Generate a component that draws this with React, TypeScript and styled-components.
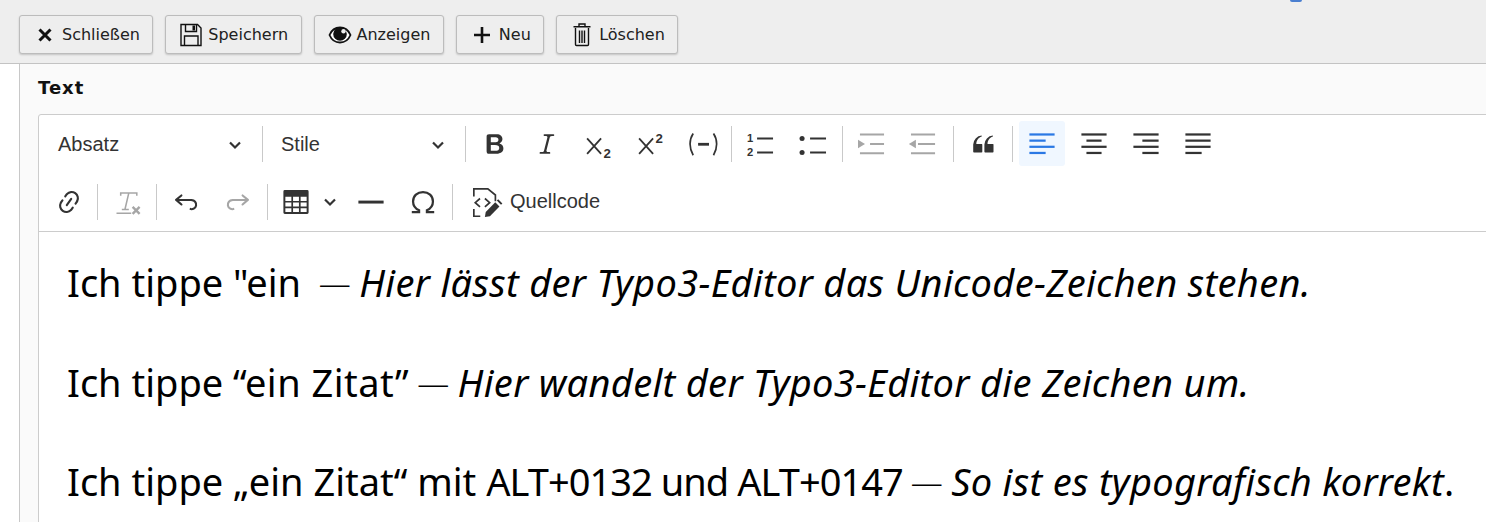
import * as React from 'react';
import styled, {createGlobalStyle} from 'styled-components';

//region [[ Styles ]]

const GlobalStyle = createGlobalStyle`
  html, body {
    margin: 0;
    padding: 0;
    height: 100%;
    background: #fff;
    overflow: hidden;
  }
`;

const Page = styled.div`
  display: flex;
  flex-direction: column;
  width: 1486px;
  height: 522px;
  overflow: hidden;
`;

const DocBar = styled.div`
  position: relative;
  display: flex;
  flex-shrink: 0;
  gap: 12px;
  align-items: flex-start;
  box-sizing: border-box;
  height: 64px;
  padding: 15px 0 0 19px;
  background: #eeeeee;
  border-bottom: 1px solid #c3c3c3;
`;

const Blip = styled.div`
  position: absolute;
  top: 0;
  left: 1290px;
  width: 12px;
  height: 2px;
  border-radius: 0 0 6px 6px;
  background: #4a7fd0;
`;

const DocButton = styled.button`
  display: flex;
  align-items: center;
  gap: 5px;
  box-sizing: border-box;
  height: 39px;
  padding: 0 12.4px 0 13px;
  background: #eeeeee;
  border: 1px solid #bcbcbc;
  border-radius: 3px;
  box-shadow: 0 1px 2px rgba(0, 0, 0, 0.18);
  color: #212121;
  font-family: "DejaVu Sans", Verdana, sans-serif;
  font-size: 16px;
`;

const DocIcon = styled.svg`
  flex-shrink: 0;
  width: 24px;
  height: 24px;
  overflow: visible;
`;

const Body = styled.div`
  flex: 1;
  min-height: 0;
  padding-left: 19px;
`;

const Panel = styled.div`
  box-sizing: border-box;
  width: 1600px;
  height: 100%;
  padding-left: 18px;
  background: #fafafa;
  border-left: 1px solid #c8c8c8;
`;

const FieldLabel = styled.div`
  height: 50px;
  color: #111;
  font-family: "DejaVu Sans", Verdana, sans-serif;
  font-size: 18px;
  font-weight: bold;
  letter-spacing: 1px;
  line-height: 47px;
`;

const Editor = styled.div`
  background: #fff;
  border: 1px solid #cccccc;
  border-radius: 3px 0 0 0;
`;

const Toolbar = styled.div`
  display: flex;
  flex-direction: column;
  gap: 13px;
  box-sizing: border-box;
  height: 117px;
  padding: 6px 0 0 7px;
  border-bottom: 1px solid #cccccc;
`;

const ToolRow = styled.div`
  display: flex;
  align-items: center;
  gap: 6px;
  height: 45px;
`;

const Separator = styled.span<{ $tight?: boolean }>`
  flex-shrink: 0;
  width: 1px;
  height: 36px;
  margin-left: ${p => (p.$tight ? '-1px' : '0')};
  background: #c9c9c9;
`;

const ToolButton = styled.button<{ $active?: boolean; $muted?: boolean }>`
  display: flex;
  align-items: center;
  justify-content: center;
  flex-shrink: 0;
  width: 46px;
  height: 45px;
  padding: 0;
  border: none;
  border-radius: 3px;
  background: ${p => (p.$active ? '#f0f7ff' : 'transparent')};
  color: ${p => (p.$active ? '#2a78e4' : p.$muted ? '#a6a6a6' : '#333333')};
`;

const SplitButton = styled(ToolButton)`
  justify-content: flex-start;
  gap: 13px;
  width: 68px;
  padding-left: 8px;
`;

const Dropdown = styled.button<{ $width: number }>`
  display: flex;
  align-items: center;
  justify-content: space-between;
  flex-shrink: 0;
  box-sizing: border-box;
  width: ${p => p.$width}px;
  height: 45px;
  padding: 2px 14px 0 12px;
  border: none;
  background: transparent;
  color: #333333;
  font-family: "Liberation Sans", Arial, sans-serif;
  font-size: 20px;
`;

const SourceButton = styled.button`
  display: flex;
  align-items: center;
  gap: 9px;
  height: 45px;
  padding: 0 6px 0 14px;
  border: none;
  background: transparent;
  color: #333333;
  font-family: "Liberation Sans", Arial, sans-serif;
  font-size: 20px;
`;

const ToolIcon = styled.svg`
  flex-shrink: 0;
  width: 28px;
  height: 28px;
  fill: currentColor;
  overflow: visible;
`;

const Chevron = styled.svg`
  flex-shrink: 0;
  width: 14px;
  height: 14px;
  fill: none;
  stroke: #333333;
  stroke-width: 2.2;
`;

const Content = styled.div`
  box-sizing: border-box;
  height: 320px;
  padding: 19px 0 0 28px;
  color: #000;
  font-family: "Noto Sans", "Open Sans", sans-serif;
  font-size: 38px;
  white-space: nowrap;
`;

const Para = styled.p`
  height: 99.5px;
  margin: 0;
  line-height: 62px;
`;

const Emphasis = styled.em`
  letter-spacing: 0.33px;
`;

const Dash = styled.span`
  margin: 0 -1.5px 0 -2px;
  font-size: 32px;
  font-weight: 300;
  vertical-align: 2px;
`;

const Spaced = styled.span<{ $ls: number }>`
  letter-spacing: ${p => p.$ls}px;
`;

//endregion [[ Styles ]]

//region [[ Icons ]]

const StrokeG = ({ children, w = 1.4 }: { children: React.ReactNode; w?: number }) =>
  <g fill="none" stroke="currentColor" strokeWidth={w}>{children}</g>;

const Lines = ({ rows }: { rows: number[][] }) =>
  <ToolIcon viewBox="0 0 20 20">
    <StrokeG w={1.6}>
      {rows.map((r, i) => <line key={i} x1={r[0]} x2={r[1]} y1={3.2 + i * 4.4} y2={3.2 + i * 4.4}/>)}
    </StrokeG>
  </ToolIcon>;

const Bold = () => <ToolIcon viewBox="0 0 20 20">
  <path d="M10.187 17H5.773c-.637 0-1.092-.138-1.364-.415-.273-.277-.409-.718-.409-1.323V4.738c0-.617.14-1.062.419-1.332.279-.27.73-.406 1.354-.406h4.68c.69 0 1.288.041 1.793.124.506.083.96.242 1.36.478.341.197.644.447.906.75a3.262 3.262 0 0 1 .808 2.162c0 1.401-.722 2.426-2.167 3.075C15.05 10.175 16 11.315 16 13.01a3.756 3.756 0 0 1-2.296 3.504 6.1 6.1 0 0 1-1.517.377c-.571.073-1.238.11-2 .11zm-.217-6.217H7v4.087h3.069c1.977 0 2.965-.69 2.965-2.072 0-.707-.256-1.22-.768-1.537-.512-.319-1.277-.478-2.296-.478zM7 5.13v3.619h2.606c.729 0 1.292-.067 1.69-.2a1.6 1.6 0 0 0 .91-.765c.165-.267.247-.566.247-.897 0-.707-.26-1.176-.778-1.409-.519-.232-1.31-.348-2.375-.348H7z"/>
</ToolIcon>;

const Italic = () => <ToolIcon viewBox="0 0 20 20">
  <path d="m9.586 14.633.021.004c-.036.335.095.655.393.962.082.083.173.15.274.201h1.474a.6.6 0 1 1 0 1.2H5.304a.6.6 0 0 1 0-1.2h1.15c.474-.07.809-.182 1.005-.334.157-.122.291-.32.404-.597l2.416-9.55a1.053 1.053 0 0 0-.281-.823 1.12 1.12 0 0 0-.442-.296H8.15a.6.6 0 0 1 0-1.2h6.443a.6.6 0 1 1 0 1.2h-1.195c-.376.056-.65.155-.823.296-.215.175-.423.439-.623.79l-2.366 9.347z"/>
</ToolIcon>;

const Subscript = () => <ToolIcon viewBox="0 0 20 20">
  <StrokeG w={1.3}><path d="M1.500 6l10 11M11.500 6l-10 11"/></StrokeG>
  <text x="13.300" y="20.300" fontFamily="Liberation Sans" fontSize="9.500" fontWeight="bold">2</text>
</ToolIcon>;

const Superscript = () => <ToolIcon viewBox="0 0 20 20">
  <StrokeG w={1.3}><path d="M1.500 6l10 11M11.500 6l-10 11"/></StrokeG>
  <text x="13.300" y="9.600" fontFamily="Liberation Sans" fontSize="9.500" fontWeight="bold">2</text>
</ToolIcon>;

const InlineCode = () => <ToolIcon viewBox="0 0 20 20">
  <StrokeG w={1.2}><path d="M3 2.500C0 7 0 13 3 18M17.500 2.500C20.500 7 20.500 13 17.500 18"/></StrokeG>
  <StrokeG w={2}><path d="M6.500 10.200h7.800"/></StrokeG>
</ToolIcon>;

const NumberedList = () => <ToolIcon viewBox="0 0 20 20">
  <StrokeG w={1.4}><path d="M7.200 6h11.400M7.200 16h11.400"/></StrokeG>
  <text x="0" y="8.800" fontFamily="Liberation Sans" fontSize="8" fontWeight="bold">1</text>
  <text x="0" y="18.800" fontFamily="Liberation Sans" fontSize="8" fontWeight="bold">2</text>
</ToolIcon>;

const BulletList = () => <ToolIcon viewBox="0 0 20 20">
  <StrokeG w={1.4}><path d="M7.900 6h11.400M7.900 16h11.400"/></StrokeG>
  <circle cx="2.200" cy="6" r="1.800"/>
  <circle cx="2.200" cy="16" r="1.800"/>
</ToolIcon>;

const Indent = () => <ToolIcon viewBox="0 0 20 20">
  <StrokeG w={1.5}><path d="M1.400 3.200h17.200M8.600 10h10M1.400 16.600h17.200"/></StrokeG>
  <path d="M0 7l5 3-5 3z"/>
</ToolIcon>;

const Outdent = () => <ToolIcon viewBox="0 0 20 20">
  <StrokeG w={1.5}><path d="M.7 3.200h17.200M5.700 10h12.200M.7 16.600h17.200"/></StrokeG>
  <path d="M4.200 7l-5 3 5 3z"/>
</ToolIcon>;

const Quote = () => <ToolIcon viewBox="0 0 20 20">
  <path d="M3 10.423a6.5 6.5 0 0 1 6.056-6.408l.038.67C6.448 5.423 5.354 7.663 5.22 10H9c.552 0 .5.432.5.986v4.511c0 .554-.448.503-1 .503h-5c-.552 0-.5-.449-.5-1.003v-4.574zm8 0a6.5 6.5 0 0 1 6.056-6.408l.038.67c-2.646.739-3.74 2.979-3.873 5.315H17c.552 0 .5.432.5.986v4.511c0 .554-.448.503-1 .503h-5c-.552 0-.5-.449-.5-1.003v-4.574z"/>
</ToolIcon>;

const Link = () => <ToolIcon viewBox="0 0 20 20">
  <path d="m11.077 15 .991-1.416a.75.75 0 1 1 1.229.86l-1.148 1.64a.748.748 0 0 1-.217.206 5.251 5.251 0 0 1-8.503-5.955.741.741 0 0 1 .12-.274l1.147-1.639a.75.75 0 1 1 1.228.86L4.933 10.7l.006.003a3.75 3.75 0 0 0 6.132 4.294l.006.004zm5.494-5.335a.748.748 0 0 1-.12.274l-1.147 1.639a.75.75 0 1 1-1.228-.86l.86-1.23a3.75 3.75 0 0 0-6.144-4.301l-.86 1.229a.75.75 0 0 1-1.229-.86l1.148-1.64a.748.748 0 0 1 .217-.206 5.251 5.251 0 0 1 8.503 5.955zm-4.563-2.532a.75.75 0 0 1 .184 1.045l-3.155 4.505a.75.75 0 1 1-1.229-.86l3.155-4.506a.75.75 0 0 1 1.045-.184z"/>
</ToolIcon>;

const RemoveFormat = () => <ToolIcon viewBox="0 0 20 20">
  <StrokeG w={1.1}>
    <path d="M5.500 5.500V3.500h11.500V5.500M11.300 3.500L8.600 15M6.300 15.300h5M2.500 18h10.500"/>
  </StrokeG>
  <StrokeG w={1.7}><path d="M14 13.500l5 5M19 13.500l-5 5"/></StrokeG>
</ToolIcon>;

const Undo = () => <ToolIcon viewBox="0 0 20 20">
  <path d="m5.042 9.367 2.189 1.837a.75.75 0 0 1-.965 1.149l-3.788-3.18a.747.747 0 0 1-.21-.284.75.75 0 0 1 .17-.945L6.23 4.762a.75.75 0 1 1 .964 1.15L4.863 7.866h8.917A.75.75 0 0 1 14 7.9a4 4 0 1 1-1.477 7.718l.344-1.489a2.5 2.5 0 1 0 1.094-4.73l.008-.032H5.042z"/>
</ToolIcon>;

const Redo = () => <ToolIcon viewBox="0 0 20 20">
  <path d="m14.958 9.367-2.189 1.837a.75.75 0 0 0 .965 1.149l3.788-3.18a.747.747 0 0 0 .21-.284.75.75 0 0 0-.17-.945L13.77 4.762a.75.75 0 1 0-.964 1.15l2.331 1.955H6.22A.75.75 0 0 0 6 7.9a4 4 0 1 0 1.477 7.718l-.344-1.489A2.5 2.5 0 1 1 6.039 9.4l-.008-.032h8.927z"/>
</ToolIcon>;

const Table = () => <ToolIcon viewBox="0 0 20 20">
  <path fillRule="evenodd" d="M2 1.500h16a1 1 0 0 1 1 1v15a1 1 0 0 1-1 1H2a1 1 0 0 1-1-1v-15a1 1 0 0 1 1-1zM2.400 6.200v3h4.300v-3zm5.500 0v3h4.200v-3zm5.400 0v3h4.300v-3zM2.400 10.400v2.900h4.300v-2.900zm5.500 0v2.900h4.200v-2.900zm5.400 0v2.900h4.300v-2.900zM2.400 14.500v2.700h4.300v-2.700zm5.500 0v2.700h4.200v-2.700zm5.400 0v2.700h4.300v-2.700z"/>
</ToolIcon>;

const HorizontalLine = () => <ToolIcon viewBox="0 0 20 20">
  <rect x="1" y="9" width="18" height="2.100"/>
</ToolIcon>;

const Omega = () => <ToolIcon viewBox="0 0 20 20">
  <StrokeG w={1.6}>
    <path d="M2 17.200h5.200v-1.300C4.400 14.600 2.900 12.200 2.900 9.600 2.900 5.500 6 2.900 10 2.900s7.100 2.600 7.100 6.700c0 2.600-1.500 5-4.300 6.300v1.300H18"/>
  </StrokeG>
</ToolIcon>;

const SourceIcon = () => <ToolIcon viewBox="0 0 20 20">
  <StrokeG w={1.2}>
    <path d="M.6 6V.6h10l5.400 4.400v4.500M.6 15v5.200h4.600"/>
    <path d="M5 7.500l-3.400 3 3.400 3M8.500 7.500l3.400 3-3.400 3"/>
  </StrokeG>
  <path d="M8.500 20.800l.6-3.600 6.800-7 3 3-6.800 7z"/>
  <path d="M17 9l1-1 3 3-1 1z"/>
</ToolIcon>;

const ChevronDown = () => <Chevron viewBox="0 0 14 14"><path d="M2 4.500l5 5 5-5"/></Chevron>;

const CloseDoc = () => <DocIcon viewBox="0 0 24 24">
  <path d="M6.500 6.500l11 11M17.500 6.500l-11 11" fill="none" stroke="#111" strokeWidth="3"/>
</DocIcon>;

const SaveDoc = () => <DocIcon viewBox="0 0 24 24">
  <g fill="none" stroke="#111" strokeWidth="1.400">
    <path d="M2 1.500h16.500l3.500 3.500v17.500H2z"/>
    <path d="M6.500 1.500v7h11v-7M5.500 22.500v-9.500h13.500v9.500"/>
  </g>
  <rect x="13.500" y="2.500" width="2.500" height="5" fill="#111"/>
</DocIcon>;

const EyeDoc = () => <DocIcon viewBox="0 0 24 24">
  <path d="M1.500 12C4 6 8 4.500 12 4.500S20 6 22.500 12C20 18 16 19.500 12 19.500S4 18 1.500 12z" fill="#fff" stroke="#111" strokeWidth="1.800"/>
  <circle cx="12" cy="11" r="6.800" fill="#111"/>
  <circle cx="15.500" cy="8.300" r="2.200" fill="#eee"/>
</DocIcon>;

const PlusDoc = () => <DocIcon viewBox="0 0 24 24">
  <path d="M12 4v16M4 12h16" fill="none" stroke="#111" strokeWidth="2.600"/>
</DocIcon>;

const TrashDoc = () => <DocIcon viewBox="0 0 24 24">
  <g fill="none" stroke="#111" strokeWidth="1.400">
    <path d="M3.500 3.800h17M9 3.500V1h6v2.500M5.500 5v16.500a1 1 0 0 0 1 1h11a1 1 0 0 0 1-1V5"/>
    <path d="M9.500 7.500v12.500M12 7.500v12.500M14.500 7.500v12.500"/>
  </g>
</DocIcon>;

//endregion [[ Icons ]]

const docActions = [
  {label: 'Schließen', icon: <CloseDoc/>},
  {label: 'Speichern', icon: <SaveDoc/>},
  {label: 'Anzeigen', icon: <EyeDoc/>},
  {label: 'Neu', icon: <PlusDoc/>},
  {label: 'Löschen', icon: <TrashDoc/>},
];

export default function App() {
  return <Page>
    <GlobalStyle/>
    <DocBar>
      <Blip/>
      {docActions.map(a => <DocButton key={a.label}>{a.icon}{a.label}</DocButton>)}
    </DocBar>
    <Body>
      <Panel>
        <FieldLabel>Text</FieldLabel>
        <Editor>
          <Toolbar>
            <ToolRow>
              <Dropdown $width={210}>Absatz<ChevronDown/></Dropdown>
              <Separator/>
              <Dropdown $width={190}>Stile<ChevronDown/></Dropdown>
              <Separator/>
              <ToolButton><Bold/></ToolButton>
              <ToolButton><Italic/></ToolButton>
              <ToolButton><Subscript/></ToolButton>
              <ToolButton><Superscript/></ToolButton>
              <ToolButton><InlineCode/></ToolButton>
              <Separator $tight/>
              <ToolButton><NumberedList/></ToolButton>
              <ToolButton><BulletList/></ToolButton>
              <Separator/>
              <ToolButton $muted><Indent/></ToolButton>
              <ToolButton $muted><Outdent/></ToolButton>
              <Separator/>
              <ToolButton><Quote/></ToolButton>
              <Separator/>
              <ToolButton $active><Lines rows={[[1, 19], [1, 12.6], [1, 19], [1, 12.6]]}/></ToolButton>
              <ToolButton><Lines rows={[[1, 19], [4.6, 15.4], [1, 19], [4.6, 15.4]]}/></ToolButton>
              <ToolButton><Lines rows={[[1, 19], [7.4, 19], [1, 19], [7.4, 19]]}/></ToolButton>
              <ToolButton><Lines rows={[[1, 19], [1, 19], [1, 19], [1, 12.6]]}/></ToolButton>
            </ToolRow>
            <ToolRow>
              <ToolButton><Link/></ToolButton>
              <Separator $tight/>
              <ToolButton $muted><RemoveFormat/></ToolButton>
              <Separator/>
              <ToolButton><Undo/></ToolButton>
              <ToolButton $muted><Redo/></ToolButton>
              <Separator/>
              <SplitButton><Table/><ChevronDown/></SplitButton>
              <ToolButton><HorizontalLine/></ToolButton>
              <ToolButton><Omega/></ToolButton>
              <Separator/>
              <SourceButton><SourceIcon/>Quellcode</SourceButton>
            </ToolRow>
          </Toolbar>
          <Content>
            <Para>Ich tippe "ein {'\u00a0'}<Dash>—</Dash> <Emphasis>Hier lässt der Typo3-Editor das Unicode-Zeichen stehen.</Emphasis></Para>
            <Para>Ich tippe <Spaced $ls={0.5}>“ein Zitat”</Spaced> <Dash>—</Dash> <Emphasis>Hier wandelt der Typo3-Editor die Zeichen um.</Emphasis></Para>
            <Para>Ich tippe „ein Zitat“ mit <Spaced $ls={-0.95}>ALT+0132 und ALT+0147</Spaced> <Dash>—</Dash> <Emphasis>So ist es typografisch korrekt</Emphasis>.</Para>
          </Content>
        </Editor>
      </Panel>
    </Body>
  </Page>;
}
